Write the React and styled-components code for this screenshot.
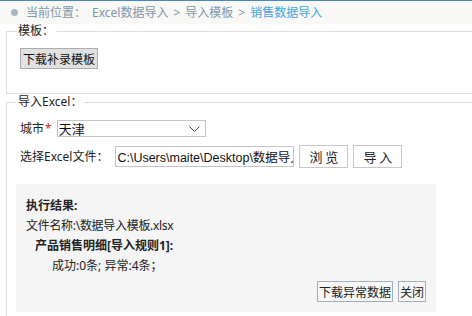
import React from "react";
import styled, { createGlobalStyle } from "styled-components";

const Global = createGlobalStyle`
  html, body { margin: 0; padding: 0; background: #fff; }
  body {
    font-family: "Noto Sans", "Noto Sans CJK SC", sans-serif;
    font-size: 12px;
    color: #222;
    overflow: hidden;
  }
  * { box-sizing: border-box; }
`;

const Page = styled.div`
  width: 472px;
  height: 316px;
  overflow: hidden;
`;

const Breadcrumb = styled.div`
  height: 24px;
  border-top: 1px solid #4a86c0;
  background: #f8f8f6;
  display: flex;
  align-items: center;
  padding-left: 11px;
  color: #8196a8;
  line-height: 14px;
  white-space: nowrap;
`;

const Bullet = styled.span`
  width: 7px;
  height: 7px;
  border-radius: 50%;
  background: #a7b6c3;
  margin-right: 8px;
`;

const Crumb = styled.span`
  margin-left: ${(p) => p.$ml || 0}px;
  color: ${(p) => (p.$current ? "#3fa6dc" : "inherit")};
`;

const Sep = styled.span`
  margin: 0 5px;
`;

const Fieldset = styled.fieldset`
  margin: ${(p) => p.$top || 0}px -20px 0 6px;
  padding: 0 0 ${(p) => p.$bottom || 0}px 9px;
  border: 1px solid #dedede;
  min-width: 0;
`;

const Legend = styled.legend`
  padding: 0 2px;
  line-height: 14px;
  font-size: 12px;
  color: #222;
`;

const GrayButton = styled.button`
  font-family: "Noto Sans CJK SC", sans-serif;
  font-size: 12px;
  height: 21px;
  padding: 0 2px;
  margin: 10px 0 0 4px;
  border: 1px solid #adadad;
  background: #e1e1e1;
  color: #111;
  line-height: 17px;
`;

const Row = styled.div`
  display: flex;
  align-items: center;
  margin: ${(p) => p.$top}px 0 0 4px;
  height: ${(p) => p.$h}px;
`;

const Label = styled.span`
  font-family: "Noto Sans", "Noto Sans CJK SC", sans-serif;
  color: #222;
  line-height: 14px;
  white-space: nowrap;
`;

const Star = styled.span`
  color: #e02020;
  margin: 0 5px 0 1px;
`;

const SelectBox = styled.div`
  position: relative;
  width: 149px;
  height: 17px;
  border: 1px solid #c4c4c4;
  background: #fff;
  font-family: "Noto Sans CJK SC", sans-serif;
  font-size: 13px;
  line-height: 15px;
  padding-left: 1px;
  color: #111;
`;

const Chevron = styled.svg`
  position: absolute;
  right: 5px;
  top: 5px;
`;

const FileInput = styled.input`
  width: 179px;
  height: 21px;
  margin: 0 0 0 7px;
  border: 1px solid #c4c4c4;
  background: #fff;
  font-family: "Liberation Sans", "Noto Sans CJK SC", sans-serif;
  font-size: 12.5px;
  padding: 0 0 0 1px;
  color: #111;
  outline: none;
`;

const PlainButton = styled.button`
  font-family: "Noto Sans CJK SC", sans-serif;
  font-size: 13px;
  width: ${(p) => p.$w}px;
  height: 23px;
  margin-left: ${(p) => p.$ml}px;
  padding: 0;
  border: 1px solid #c8c8c8;
  background: #fff;
  color: #222;
  line-height: 19px;
  white-space: pre;
`;

const Result = styled.div`
  margin-top: 16px;
  width: 420px;
  height: 128px;
  background: #f5f5f5;
  padding: 12px 10px 10px 10px;
  display: flex;
  flex-direction: column;
  font-family: "Noto Sans", "Noto Sans CJK SC", sans-serif;
  font-size: 12px;
  color: #222;
`;

const Line = styled.div`
  line-height: 20px;
  height: 20px;
  padding-left: ${(p) => p.$indent || 0}px;
  font-weight: ${(p) => (p.$bold ? 700 : 400)};
  letter-spacing: ${(p) => (p.$tight ? "-0.3px" : "0")};
  white-space: nowrap;
`;

const Actions = styled.div`
  margin-top: auto;
  display: flex;
  justify-content: flex-end;
  gap: 5px;
`;

const SmallButton = styled.button`
  font-family: "Noto Sans CJK SC", sans-serif;
  font-size: 12px;
  height: 21px;
  padding: 0 1px;
  border: 1px solid #a3afbd;
  background: #f7f7f7;
  color: #222;
  line-height: 17px;
`;

export default function App() {
  return (
    <Page>
      <Global />
      <Breadcrumb>
        <Bullet />
        <Crumb>当前位置：</Crumb>
        <Crumb $ml={6}>Excel数据导入</Crumb>
        <Sep>&gt;</Sep>
        <Crumb>导入模板</Crumb>
        <Sep>&gt;</Sep>
        <Crumb $current>销售数据导入</Crumb>
      </Breadcrumb>

      <Fieldset $bottom={24}>
        <Legend>模板：</Legend>
        <GrayButton>下载补录模板</GrayButton>
      </Fieldset>

      <Fieldset $top={1} $bottom={40}>
        <Legend>导入Excel：</Legend>
        <Row $top={11} $h={17}>
          <Label>城市</Label>
          <Star>*</Star>
          <SelectBox>
            天津
            <Chevron width="11" height="6" viewBox="0 0 11 6">
              <path d="M0.5 0.5 L5.5 5.5 L10.5 0.5" fill="none" stroke="#444" strokeWidth="1" />
            </Chevron>
          </SelectBox>
        </Row>
        <Row $top={8} $h={23}>
          <Label>选择Excel文件：</Label>
          <FileInput readOnly value="C:\Users\maite\Desktop\数据导入模板.xlsx" />
          <PlainButton $w={49} $ml={5}>{"浏 览"}</PlainButton>
          <PlainButton $w={49} $ml={5}>{"导 入"}</PlainButton>
        </Row>
        <Result>
          <Line $bold>执行结果:</Line>
          <Line $tight>文件名称:\数据导入模板.xlsx</Line>
          <Line $bold $indent={9}>产品销售明细[导入规则1]:</Line>
          <Line $indent={26}>成功:0条; 异常:4条；</Line>
          <Actions>
            <SmallButton>下载异常数据</SmallButton>
            <SmallButton>关闭</SmallButton>
          </Actions>
        </Result>
      </Fieldset>
    </Page>
  );
}
